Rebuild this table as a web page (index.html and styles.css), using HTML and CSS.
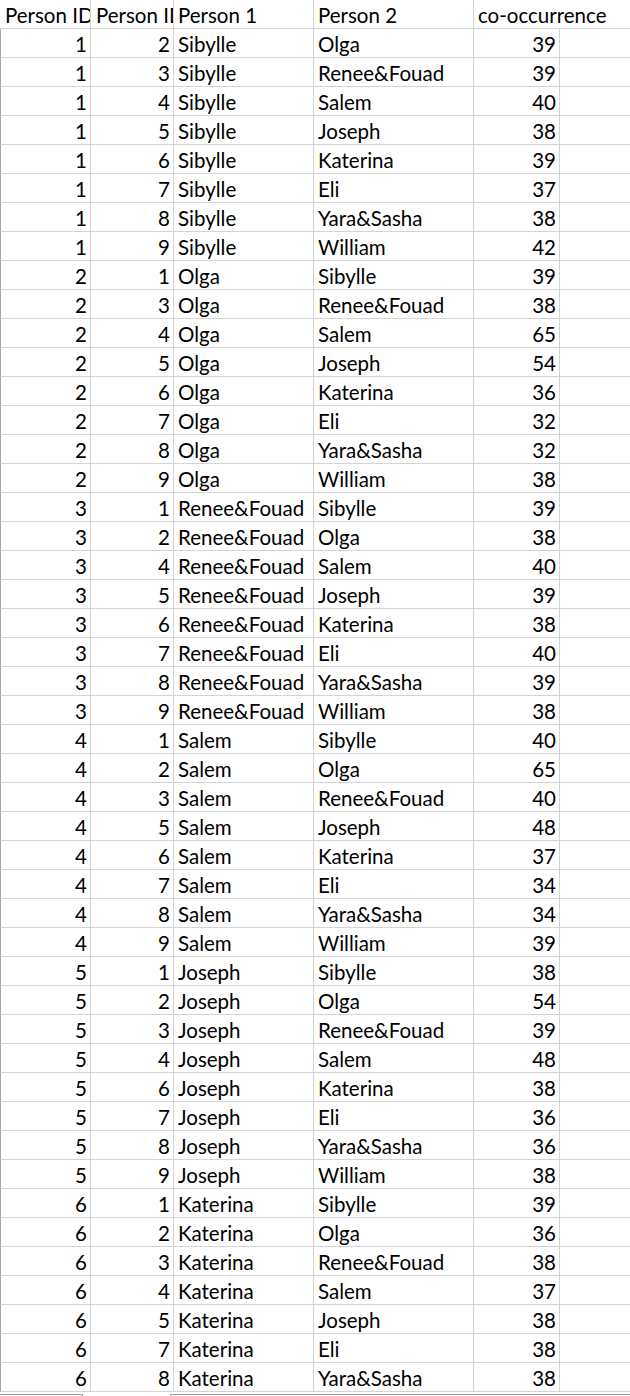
FILE: index.html
```html
<!DOCTYPE html>
<html>
<head>
<meta charset="utf-8">
<link rel="stylesheet" href="styles.css">
</head>
<body>
<div class="sheet" id="sheet">
  <div class="c hd clip">Person ID</div>
  <div class="c hd clip">Person ID</div>
  <div class="c hd">Person 1</div>
  <div class="c hd">Person 2</div>
  <div class="c hd over">co-occurrence</div>
  <div class="c hd last"></div>
</div>
<div class="tabs">
  <div class="tab-line first"></div>
  <div class="tab-gap"></div>
  <div class="tab-line rest"></div>
</div>
<script src="app.js"></script>
</body>
</html>
```

FILE: app.js
```js
const rows = [
[1,2,"Sibylle","Olga",39],[1,3,"Sibylle","Renee&Fouad",39],[1,4,"Sibylle","Salem",40],[1,5,"Sibylle","Joseph",38],
[1,6,"Sibylle","Katerina",39],[1,7,"Sibylle","Eli",37],[1,8,"Sibylle","Yara&Sasha",38],[1,9,"Sibylle","William",42],
[2,1,"Olga","Sibylle",39],[2,3,"Olga","Renee&Fouad",38],[2,4,"Olga","Salem",65],[2,5,"Olga","Joseph",54],
[2,6,"Olga","Katerina",36],[2,7,"Olga","Eli",32],[2,8,"Olga","Yara&Sasha",32],[2,9,"Olga","William",38],
[3,1,"Renee&Fouad","Sibylle",39],[3,2,"Renee&Fouad","Olga",38],[3,4,"Renee&Fouad","Salem",40],[3,5,"Renee&Fouad","Joseph",39],
[3,6,"Renee&Fouad","Katerina",38],[3,7,"Renee&Fouad","Eli",40],[3,8,"Renee&Fouad","Yara&Sasha",39],[3,9,"Renee&Fouad","William",38],
[4,1,"Salem","Sibylle",40],[4,2,"Salem","Olga",65],[4,3,"Salem","Renee&Fouad",40],[4,5,"Salem","Joseph",48],
[4,6,"Salem","Katerina",37],[4,7,"Salem","Eli",34],[4,8,"Salem","Yara&Sasha",34],[4,9,"Salem","William",39],
[5,1,"Joseph","Sibylle",38],[5,2,"Joseph","Olga",54],[5,3,"Joseph","Renee&Fouad",39],[5,4,"Joseph","Salem",48],
[5,6,"Joseph","Katerina",38],[5,7,"Joseph","Eli",36],[5,8,"Joseph","Yara&Sasha",36],[5,9,"Joseph","William",38],
[6,1,"Katerina","Sibylle",39],[6,2,"Katerina","Olga",36],[6,3,"Katerina","Renee&Fouad",38],[6,4,"Katerina","Salem",37],
[6,5,"Katerina","Joseph",38],[6,7,"Katerina","Eli",38],[6,8,"Katerina","Yara&Sasha",38]
];
const sheet = document.getElementById('sheet');
const frag = document.createDocumentFragment();
for (const r of rows) {
  const cls = ['c num first-col','c num','c txt','c txt','c num',''];
  const vals = [r[0], r[1], r[2], r[3], r[4], ''];
  vals.forEach((v, i) => {
    const d = document.createElement('div');
    d.className = i === 5 ? 'c last' : cls[i];
    d.textContent = v;
    frag.appendChild(d);
  });
}
sheet.appendChild(frag);
```

FILE: styles.css
```css
html, body {
  margin: 0;
  padding: 0;
  background: #ffffff;
}
body {
  width: 630px;
  height: 1396px;
  overflow: hidden;
  font-family: Lato, "Liberation Sans", sans-serif;
  font-size: 20.5px;
  color: #000000;
}
.sheet {
  display: grid;
  grid-template-columns: 91px 83px 140px 160px 86px 1fr;
  grid-auto-rows: 29px;
}
.c {
  box-sizing: border-box;
  height: 29px;
  line-height: 28px;
  padding: 1px 3px 0;
  border-right: 1px solid #d4d4d4;
  border-bottom: 1px solid #d4d4d4;
  white-space: nowrap;
}
.hd {
  padding-left: 4px;
}
.clip {
  overflow: hidden;
  padding-left: 5px;
}
.over {
  border-right: none;
  overflow: visible;
}
.num {
  text-align: right;
}
.txt {
  padding-left: 4px;
}
.first-col {
  border-left: 1px solid #a6a6a6;
}
.last {
  border-right: none;
}
.tabs {
  display: flex;
  height: 4px;
  margin-top: 0;
}
.tab-line {
  margin-top: 2px;
  border-top: 1px solid #a0a0a0;
}
.first {
  width: 82px;
  border-right: 1px solid #a0a0a0;
}
.tab-gap {
  width: 87px;
}
.rest {
  flex: 1;
  border-left: 1px solid #a0a0a0;
}
```
